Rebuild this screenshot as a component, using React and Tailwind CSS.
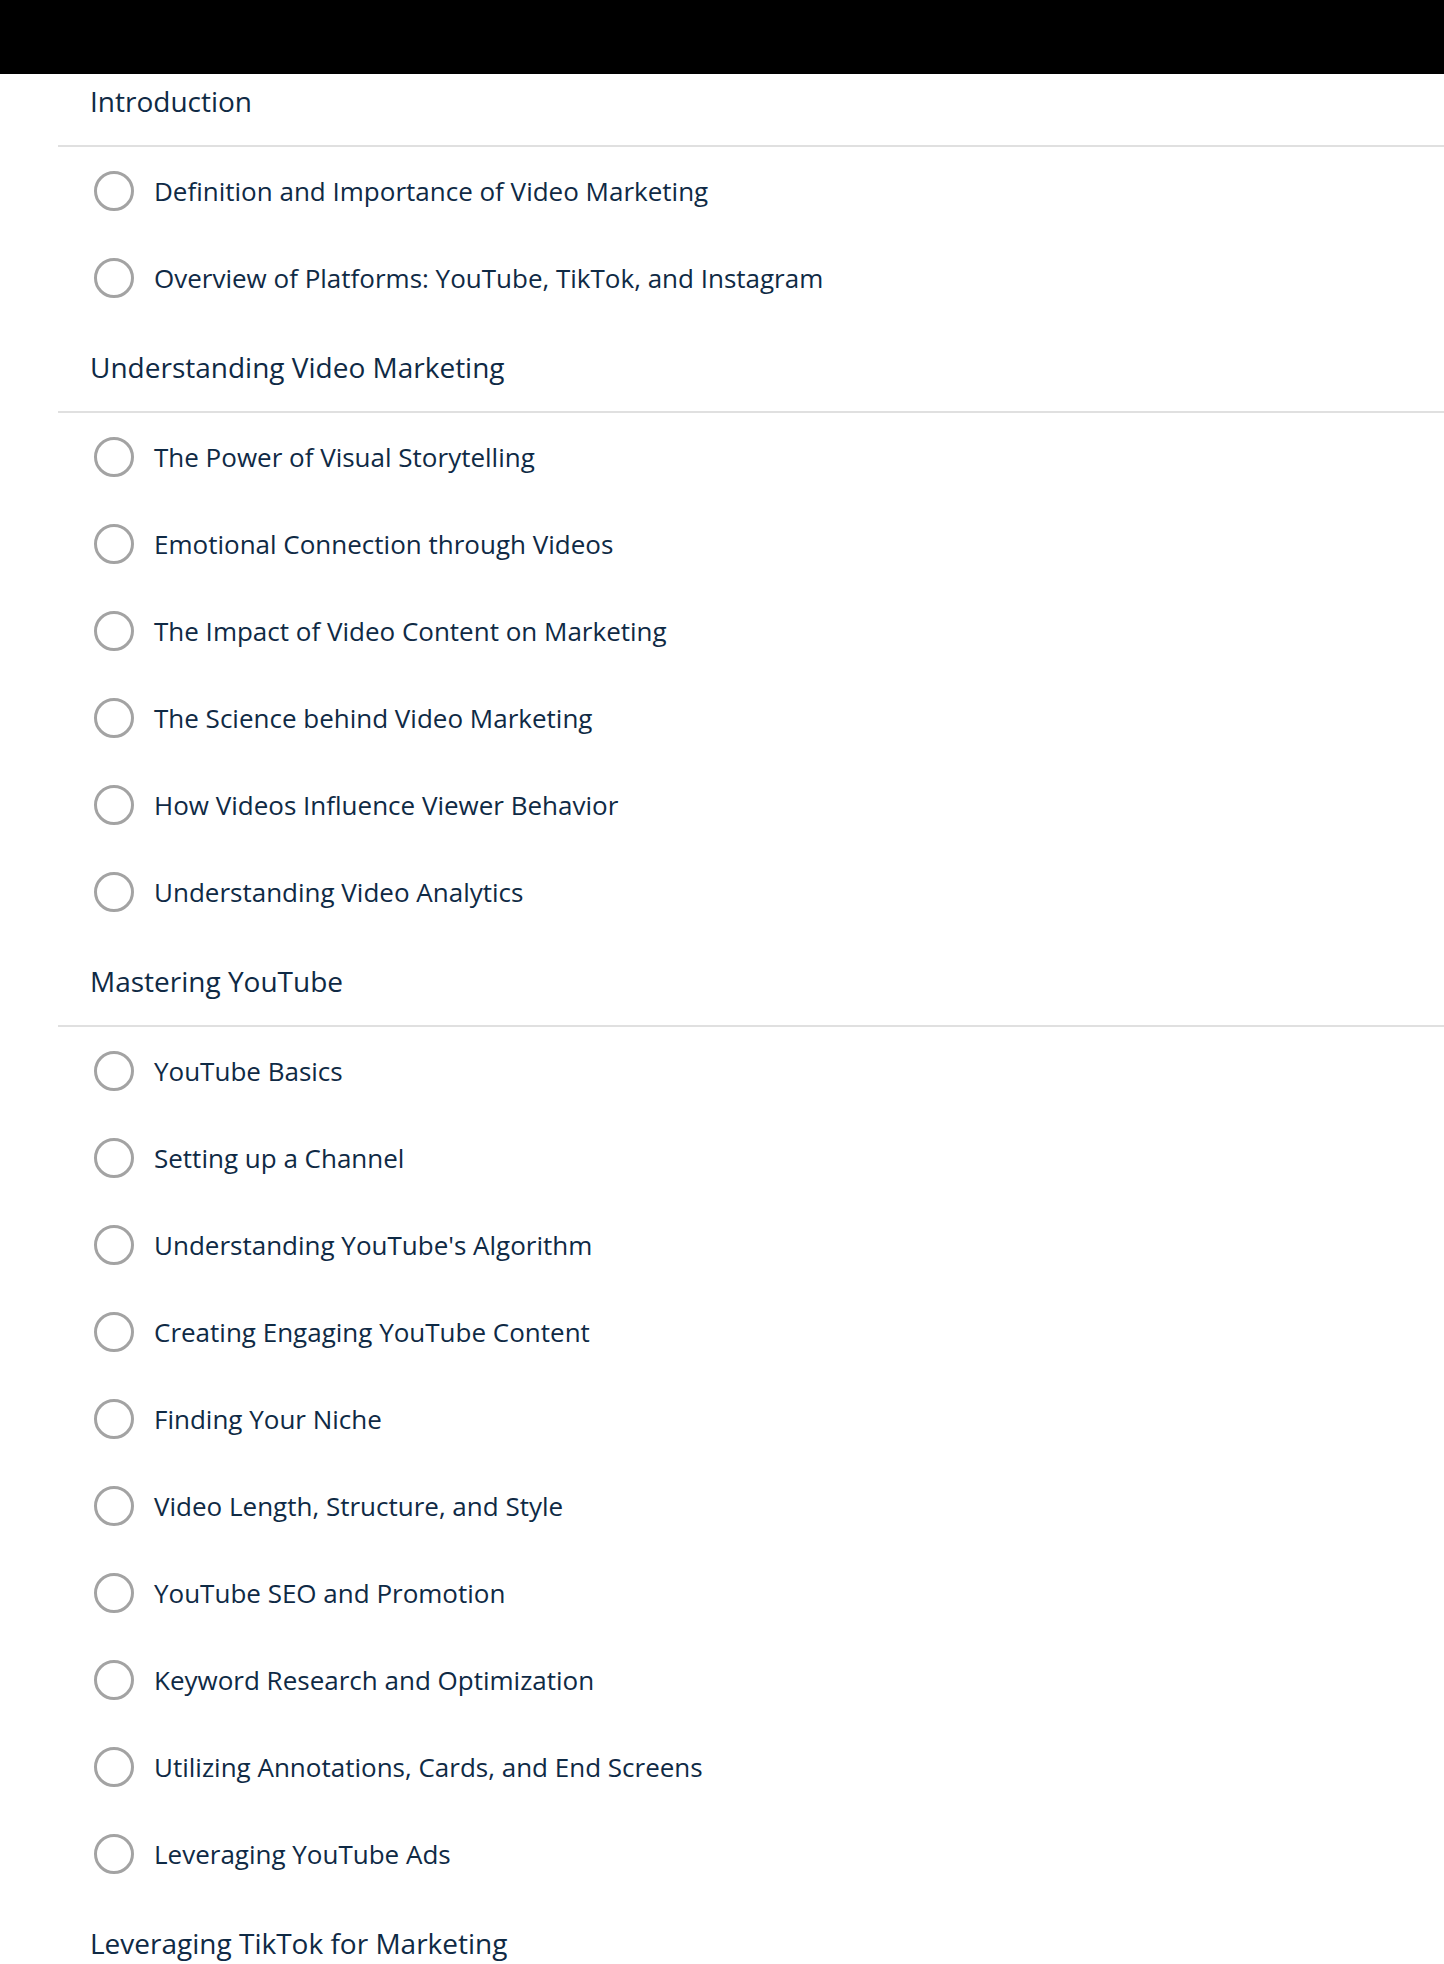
import React from 'react';

const sections = [
    {
        title: 'Introduction',
        lessons: [
            'Definition and Importance of Video Marketing',
            'Overview of Platforms: YouTube, TikTok, and Instagram',
        ],
    },
    {
        title: 'Understanding Video Marketing',
        lessons: [
            'The Power of Visual Storytelling',
            'Emotional Connection through Videos',
            'The Impact of Video Content on Marketing',
            'The Science behind Video Marketing',
            'How Videos Influence Viewer Behavior',
            'Understanding Video Analytics',
        ],
    },
    {
        title: 'Mastering YouTube',
        lessons: [
            'YouTube Basics',
            'Setting up a Channel',
            "Understanding YouTube's Algorithm",
            'Creating Engaging YouTube Content',
            'Finding Your Niche',
            'Video Length, Structure, and Style',
            'YouTube SEO and Promotion',
            'Keyword Research and Optimization',
            'Utilizing Annotations, Cards, and End Screens',
            'Leveraging YouTube Ads',
        ],
    },
    {
        title: 'Leveraging TikTok for Marketing',
        lessons: [],
    },
];

const LessonRow = ({ label }) => (
    <div className="flex h-[87px] items-center pl-[36px]">
        <span className="h-[40px] w-[40px] shrink-0 rounded-full border-[3.5px] border-[#a3a3a3]" />
        <span className="ml-[20px] text-[26px] leading-[36px] text-[#0f2a45]">{label}</span>
    </div>
);

const App = () => {
    return (
        <div className="min-h-screen overflow-hidden bg-white font-['Open_Sans',sans-serif]">
            {/* Top bar */}
            <div className="h-[74px] w-full bg-black" />

            <div className="pl-[58px]">
                {sections.map((section, i) => (
                    <div key={section.title}>
                        <div className={`${i === 0 ? 'pt-[9px]' : 'pt-[28px]'} pb-[26px] pl-[32px]`}>
                            <h2 className="text-[28px] leading-[36px] text-[#0f2a45]">{section.title}</h2>
                        </div>
                        <div className="h-[2px] bg-[#e0e0e0]" />
                        {section.lessons.map((lesson) => (
                            <LessonRow key={lesson} label={lesson} />
                        ))}
                    </div>
                ))}
            </div>
        </div>
    );
};

export default App;
